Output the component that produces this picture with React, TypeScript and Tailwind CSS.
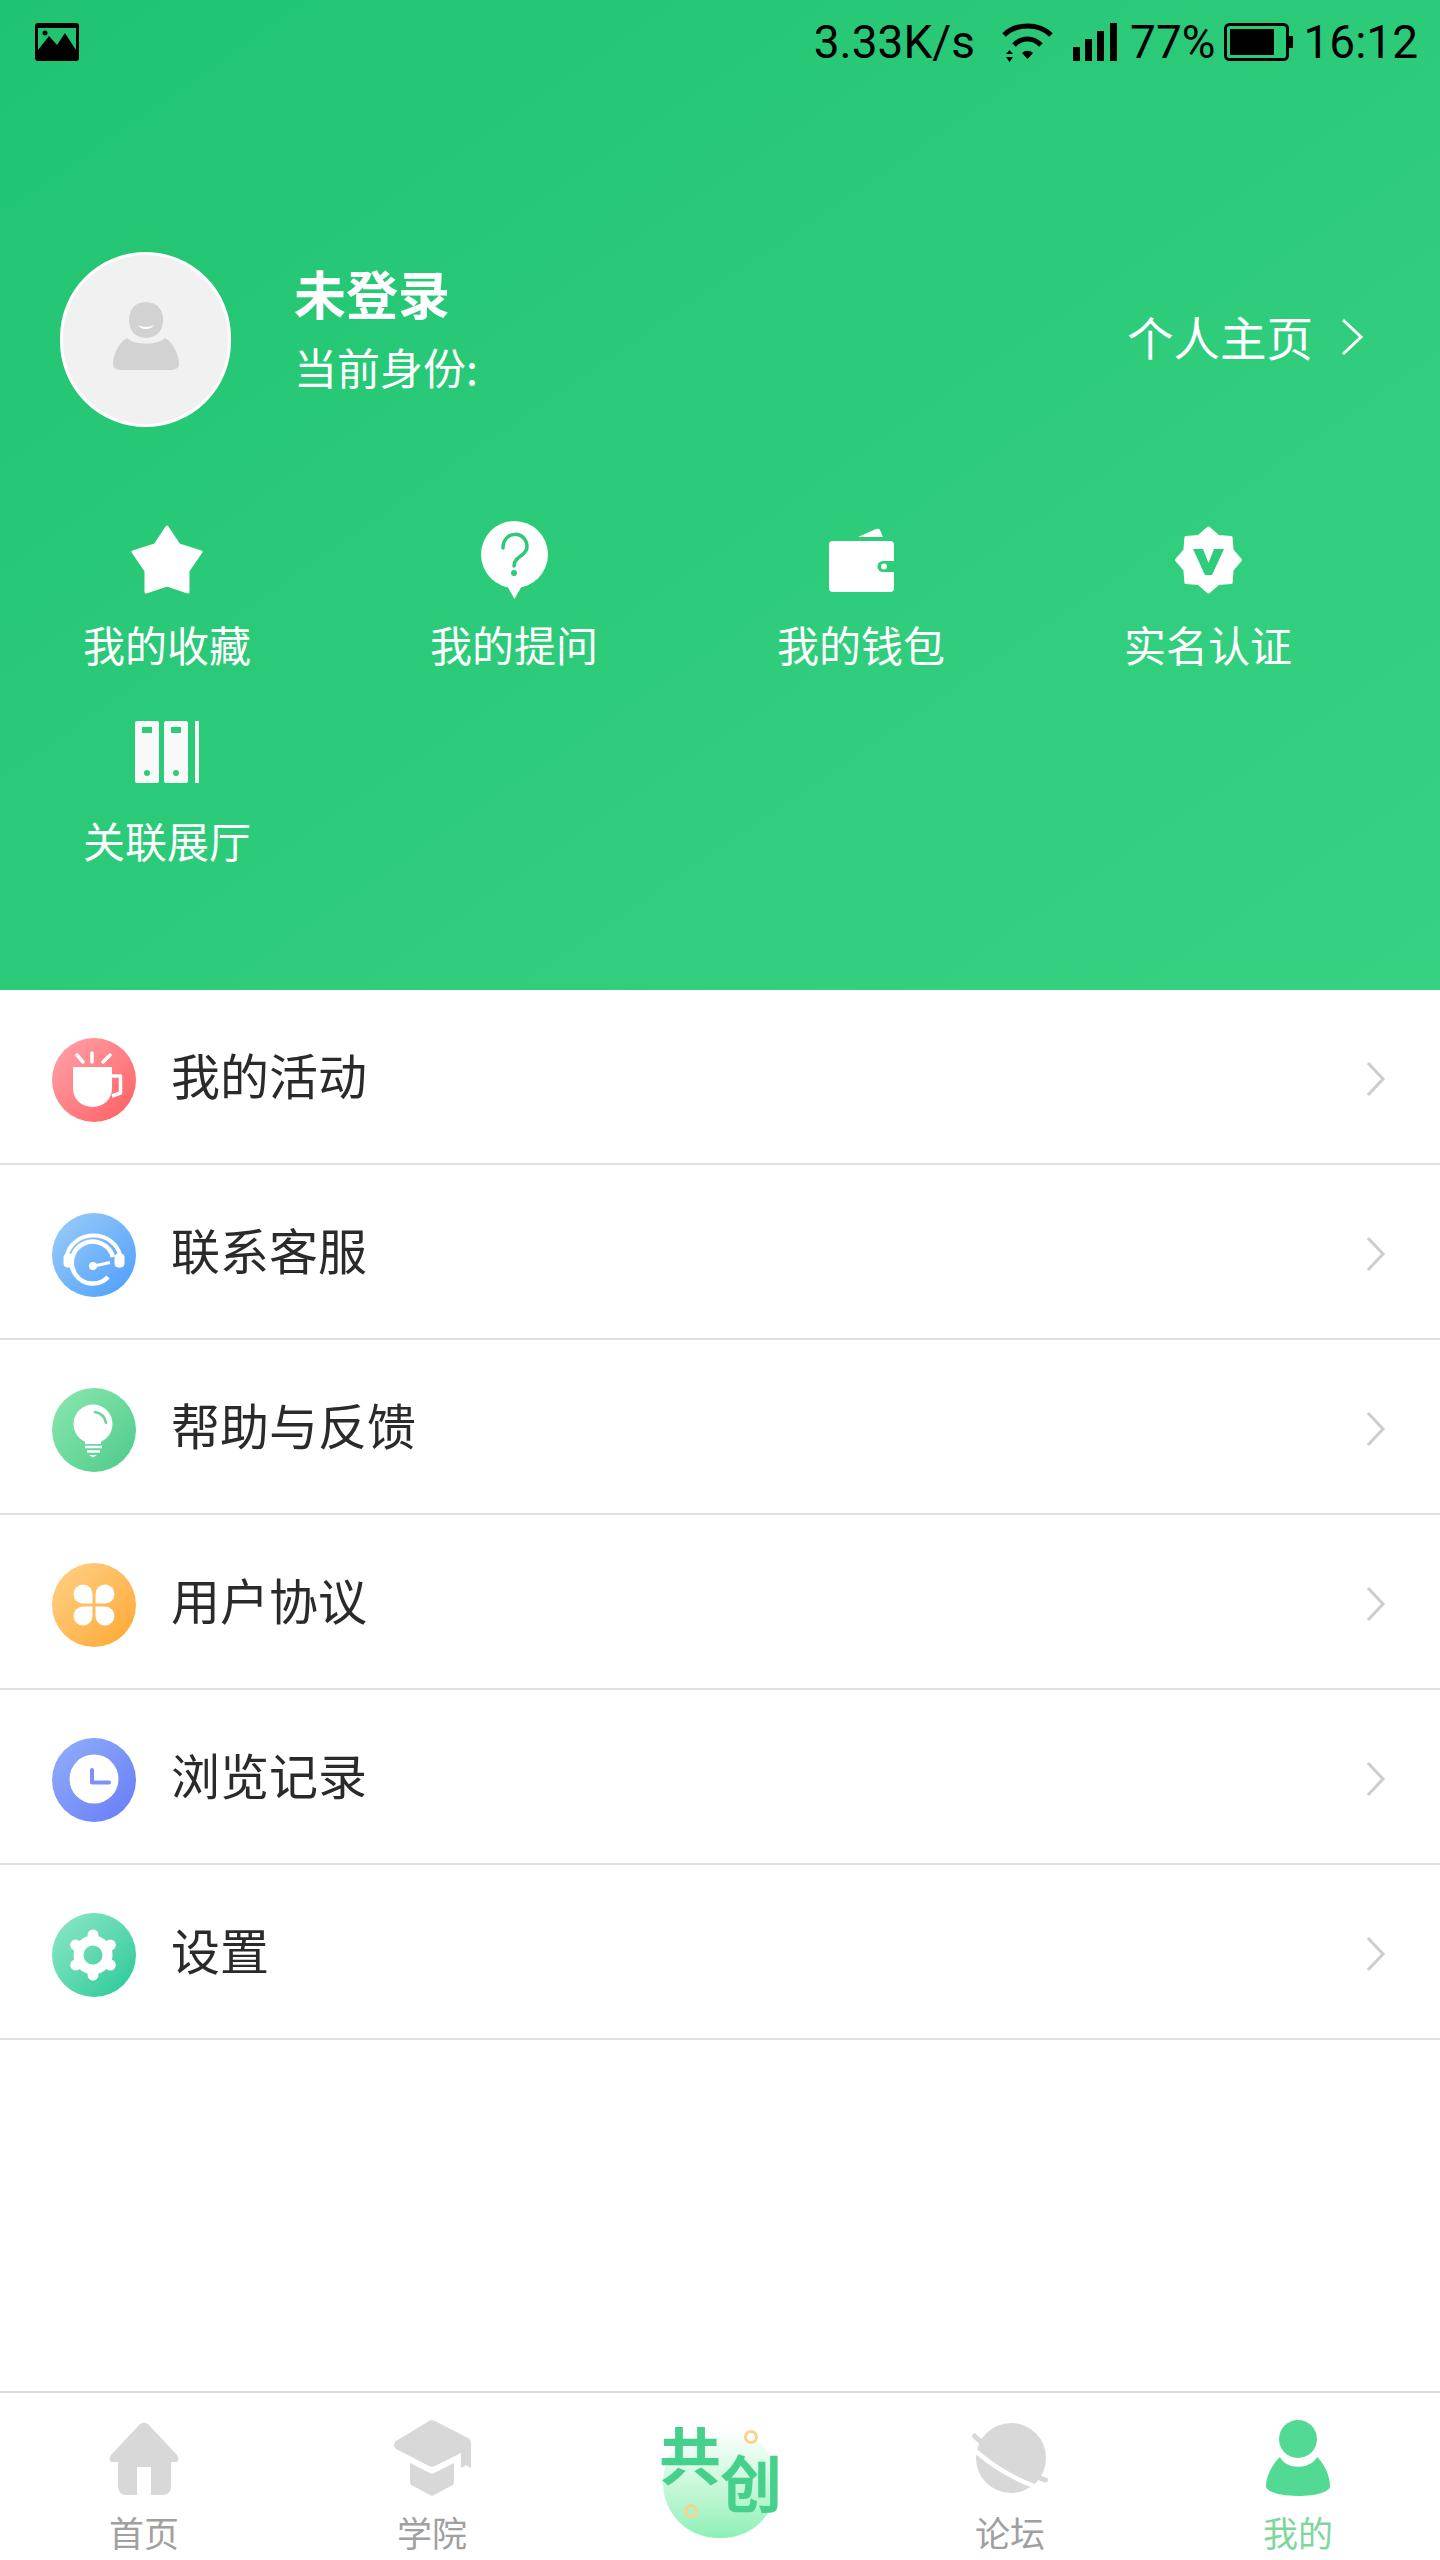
import type { ReactNode } from 'react';

const StarIcon = () => (
  <svg width="72" height="70" viewBox="0 0 72 70" fill="#fff">
    <path
      d="M36 2 L48 20 L70 27 L57 46 L57 67 L36 60 L15 67 L15 46 L2 27 L24 20 Z"
      stroke="#fff"
      strokeWidth="3"
      strokeLinejoin="round"
    />
  </svg>
);

const QuestionIcon = () => (
  <svg width="67" height="78" viewBox="0 0 67 78">
    <circle cx="33.5" cy="33.5" r="33.5" fill="#fff" />
    <path d="M25 63 L33.5 78 L42 63 Z" fill="#fff" />
    <path
      d="M22 27 C22 9 46 9 46 26 C46 35 33 35 33 45"
      fill="none"
      stroke="#2bca79"
      strokeWidth="3.5"
      strokeLinecap="round"
    />
    <circle cx="33" cy="52" r="3" fill="#2bca79" />
  </svg>
);

const WalletIcon = () => (
  <svg width="65" height="64" viewBox="0 0 65 64">
    <path d="M29 9 L47 1 Q50 0 51 2 L54 9 Z" fill="#fff" />
    <rect x="0" y="13" width="65" height="51" rx="4" fill="#fff" />
    <path d="M65 33 H54 A5.5 5.500 0 0 0 54 44 H65 Z" fill="#2fcc7c" />
    <circle cx="55" cy="38.500" r="3" fill="#fff" />
  </svg>
);

const BadgeIcon = () => (
  <svg width="69" height="68" viewBox="0 0 69 68">
    <path
      d="M34.500 2 L44.300 10.400 L57.100 11.400 L58.100 24.200 L66.500 34 L58.100 43.800 L57.100 56.600 L44.300 57.600 L34.500 66 L24.700 57.600 L11.900 56.600 L10.900 43.800 L2.500 34 L10.900 24.200 L11.900 11.400 L24.700 10.400 Z"
      fill="#fff"
      stroke="#fff"
      strokeWidth="3"
      strokeLinejoin="round"
    />
    <path d="M19 23 H29 L34.500 37 L40 23 H50 L38 49 H31 Z" fill="#2fcc7c" />
  </svg>
);

const BooksIcon = () => (
  <svg width="64" height="62" viewBox="0 0 64 62" className="mb-[8px]">
    <rect x="0" y="0" width="24" height="62" rx="2" fill="#f7faf8" />
    <rect x="29" y="0" width="24" height="62" rx="2" fill="#f7faf8" />
    <rect x="60" y="0" width="4" height="62" fill="#f7faf8" />
    <rect x="7" y="6" width="10" height="6" fill="#2dcb7a" />
    <rect x="36" y="6" width="10" height="6" fill="#2dcb7a" />
    <circle cx="12" cy="52" r="3" fill="#2dcb7a" />
    <circle cx="41" cy="52" r="3" fill="#2dcb7a" />
  </svg>
);

const CupIcon = () => (
  <svg width="84" height="84" viewBox="0 0 84 84" fill="#fff">
    <path d="M22 30 H59 V50 C59 61 51 68 40.500 68 C30 68 22 61 22 50 Z" stroke="#fff" strokeWidth="2" strokeLinejoin="round" />
    <path d="M60 38 H68.500 V55 L60 58" fill="none" stroke="#fff" strokeWidth="3.500" strokeLinejoin="round" />
    <path d="M40 15 V24 M25 17 L31 24 M58 17 L51 24" stroke="#fff" strokeWidth="3.500" strokeLinecap="round" />
  </svg>
);

const HeadsetIcon = () => (
  <svg width="84" height="84" viewBox="0 0 84 84" fill="none" stroke="#fff">
    <path d="M56 64 A21 21 0 1 1 61 44" strokeWidth="4.500" />
    <path d="M15 42 A27 24 0 0 1 68 42" strokeWidth="4" />
    <rect x="12" y="41" width="9" height="13" rx="3" fill="#fff" strokeWidth="1" />
    <rect x="63" y="41" width="9" height="13" rx="3" fill="#fff" strokeWidth="1" />
    <path d="M42 53 L58 49.500" strokeWidth="3" />
    <circle cx="41" cy="53" r="4" fill="#fff" strokeWidth="0" />
  </svg>
);

const BulbIcon = () => (
  <svg width="84" height="84" viewBox="0 0 84 84" fill="none">
    <circle cx="41" cy="36" r="19.500" fill="#fff" />
    <path d="M33 50 H49 V56 H33 Z" fill="#fff" />
    <path d="M33 59 H50 M35 63.500 H48" stroke="#fff" strokeWidth="2.500" />
    <path d="M37 67 H45 L41 69.500 Z" fill="#fff" />
    <path d="M43 24 C49 25 53 29 54 35" stroke="#6ad79d" strokeWidth="2.500" strokeLinecap="round" />
  </svg>
);

const CloverIcon = () => (
  <svg width="84" height="84" viewBox="0 0 84 84" fill="#fff">
    <path d="M40.500 40.500 V31 A9.500 9.500 0 0 0 31 21.500 A9.500 9.500 0 0 0 21.500 31 A9.500 9.500 0 0 0 31 40.500 Z" />
    <path d="M43.500 40.500 V31 A9.500 9.500 0 0 1 53 21.500 A9.500 9.500 0 0 1 62.500 31 A9.500 9.500 0 0 1 53 40.500 Z" />
    <path d="M40.500 43.500 V53 A9.500 9.500 0 0 1 31 62.500 A9.500 9.500 0 0 1 21.500 53 A9.500 9.500 0 0 1 31 43.500 Z" />
    <path d="M43.500 43.500 V53 A9.500 9.500 0 0 0 53 62.500 A9.500 9.500 0 0 0 62.500 53 A9.500 9.500 0 0 0 53 43.500 Z" />
  </svg>
);

const ClockIcon = () => (
  <svg width="84" height="84" viewBox="0 0 84 84" fill="none">
    <circle cx="42" cy="41" r="24.500" fill="#fff" />
    <path d="M40 32 V44.500 H57" stroke="#7c92f7" strokeWidth="4" strokeLinecap="round" strokeLinejoin="round" />
  </svg>
);

const GearIcon = () => (
  <svg width="84" height="84" viewBox="0 0 84 84" fill="none">
    <circle cx="41" cy="42" r="14.500" stroke="#fff" strokeWidth="10" />
    <g fill="#fff">
      <circle cx="41" cy="22" r="5.500" />
      <circle cx="41" cy="62" r="5.500" />
      <circle cx="23.700" cy="32" r="5.500" />
      <circle cx="58.300" cy="52" r="5.500" />
      <circle cx="23.700" cy="52" r="5.500" />
      <circle cx="58.300" cy="32" r="5.500" />
    </g>
  </svg>
);

const RowChevron = () => (
  <svg width="22" height="42" viewBox="0 0 22 42" fill="none">
    <path d="M3 5 L18 21 L3 37" stroke="#cdcdcd" strokeWidth="3" />
  </svg>
);

const quickLinks: { label: string; icon: ReactNode }[] = [
  { label: '我的收藏', icon: <StarIcon /> },
  { label: '我的提问', icon: <QuestionIcon /> },
  { label: '我的钱包', icon: <WalletIcon /> },
  { label: '实名认证', icon: <BadgeIcon /> },
  { label: '关联展厅', icon: <BooksIcon /> },
];

const menuRows: { label: string; bg: string; icon: ReactNode }[] = [
  { label: '我的活动', bg: 'from-[#ffa3ab] to-[#ff5b60]', icon: <CupIcon /> },
  { label: '联系客服', bg: 'from-[#9dcdf8] to-[#4a9dfa]', icon: <HeadsetIcon /> },
  { label: '帮助与反馈', bg: 'from-[#8ae8b0] to-[#4bca8a]', icon: <BulbIcon /> },
  { label: '用户协议', bg: 'from-[#ffd184] to-[#ffa729]', icon: <CloverIcon /> },
  { label: '浏览记录', bg: 'from-[#93aefb] to-[#667cf5]', icon: <ClockIcon /> },
  { label: '设置', bg: 'from-[#8ce8ca] to-[#0cc898]', icon: <GearIcon /> },
];

const StatusBar = () => (
  <div className="h-[84px] flex items-center justify-between pl-[35px] pr-[22px] text-black font-['Roboto',sans-serif] text-[46px] leading-none">
    <svg width="44" height="38" viewBox="0 0 44 38">
      <rect x="0" y="0" width="44" height="38" rx="3" fill="#000" />
      <rect x="3" y="5" width="38" height="22" fill="#22c472" />
      <path d="M3 27 L14 13 L22 22 L30 10 L41 27 Z" fill="#000" />
      <circle cx="10" cy="10" r="2.500" fill="#000" />
    </svg>
    <div className="flex items-center">
      <span className="mr-[27px]">3.33K/s</span>
      <svg width="51" height="44" viewBox="0 0 51 44" fill="none" className="mr-[20px]">
        <path d="M2 15 C14 3 37 3 49 15" stroke="#000" strokeWidth="5" />
        <path d="M12 25 C20 17 31 17 39 25" stroke="#000" strokeWidth="5" />
        <path d="M20 33 C23 30 28 30 31 33 L25.500 39 Z" fill="#000" />
        <path d="M4 34 H11 L7.500 30 Z M4 37 H11 L7.500 42 Z" fill="#000" />
      </svg>
      <svg width="44" height="38" viewBox="0 0 44 38" fill="#000" className="mr-[13px]">
        <rect x="0" y="24" width="7" height="14" />
        <rect x="12" y="16" width="7" height="22" />
        <rect x="24" y="8" width="7" height="30" />
        <rect x="37" y="0" width="7" height="38" />
      </svg>
      <span className="mr-[9px]">77%</span>
      <svg width="69" height="38" viewBox="0 0 69 38" fill="none" className="mr-[10px]">
        <rect x="1.500" y="1.500" width="62" height="35" rx="4" stroke="#000" strokeWidth="3" />
        <rect x="6" y="6" width="44" height="26" fill="#000" />
        <rect x="65" y="13" width="4" height="12" fill="#000" />
      </svg>
      <span>16:12</span>
    </div>
  </div>
);

const Profile = () => (
  <div className="mt-[168px] flex items-center pl-[60px] pr-[76px]">
    <div className="w-[171px] h-[175px] rounded-full bg-[#f1f1f1] border-[3px] border-white flex items-center justify-center">
      <svg width="70" height="68" viewBox="0 0 70 72" fill="#d2d2d2" className="mb-[8px]">
        <path d="M35 0 C47 0 54 9 53 21 C52 32 45 38 35 38 C25 38 18 32 17 21 C16 9 23 0 35 0 Z" />
        <path d="M15 38 C22 46 48 46 55 38 C64 43 70 56 70 66 C70 70 66 72 62 72 H8 C4 72 0 70 0 66 C0 56 6 43 15 38 Z" />
        <path d="M26 24 C30 30 40 30 44 24 C40 27 30 27 26 24 Z" fill="#fff" />
      </svg>
    </div>
    <div className="ml-[63px] mb-[24px] text-white">
      <div className="text-[52px] leading-[64px] font-bold">未登录</div>
      <div className="text-[43px] leading-[56px] mt-[13px]">当前身份:</div>
    </div>
    <div className="ml-auto mb-[6px] flex items-center text-white">
      <span className="text-[46.500px] leading-none">个人主页</span>
      <svg width="24" height="40" viewBox="0 0 24 40" fill="none" className="ml-[27px]">
        <path d="M3 3 L21 20 L3 37" stroke="#fff" strokeWidth="3" />
      </svg>
    </div>
  </div>
);

const QuickLinks = () => (
  <div className="mt-[93px] pl-[84px] grid grid-cols-[repeat(4,166px)] gap-x-[181px] gap-y-[41px]">
    {quickLinks.map((item) => (
      <div key={item.label} className="flex flex-col items-center h-[155px]">
        <div className="h-[80px] flex items-center justify-center">{item.icon}</div>
        <div className="mt-[16px] text-white text-[42px] leading-[56px] whitespace-nowrap">{item.label}</div>
      </div>
    ))}
  </div>
);

const Menu = () => (
  <div>
    {menuRows.map((row) => (
      <div key={row.label} className="h-[175px] border-b-2 border-[#e0e0e0] flex items-center pl-[52px] pr-[53px]">
        <div className={`w-[84px] h-[84px] mt-[6px] rounded-full bg-linear-to-br ${row.bg}`}>{row.icon}</div>
        <div className="ml-[35px] mb-[6px] text-[49px] leading-none text-[#2a2a2a]">{row.label}</div>
        <div className="ml-auto mt-[4px] flex">
          <RowChevron />
        </div>
      </div>
    ))}
  </div>
);

const HomeIcon = () => (
  <svg width="70" height="73" viewBox="0 0 70 73" fill="#d8d8d8">
    <path d="M31 2 Q35 -1 39 2 L68 33 Q72 40 65 40 H62 V64 Q62 73 53 73 H42 V45 H28 V73 H18 Q9 73 9 64 V40 H5 Q-2 40 2 33 Z" />
  </svg>
);

const CapIcon = () => (
  <svg width="78" height="76" viewBox="0 0 78 76" fill="#d8d8d8">
    <path d="M36 1 Q39 -0.500 42 1 L75 18 Q78 20 78 24 V48 L73 45 L68 48 V33 L42 46 Q39 47.500 36 46 L3 29 Q-1 25 3 21 Z" />
    <path d="M17 43 L39 54 L61 43 V62 Q61 65 58 66 L39 76 L20 66 Q17 65 17 62 Z" />
  </svg>
);

const PlanetIcon = () => (
  <svg width="76" height="72" viewBox="0 0 76 72" fill="none">
    <circle cx="39" cy="36" r="35" fill="#d8d8d8" />
    <path d="M2.500 14 C20 32 45 50 73.500 58" stroke="#d8d8d8" strokeWidth="5" strokeLinecap="round" />
    <path d="M-2 24 C15 40 38 55 62 64" stroke="#fff" strokeWidth="4.500" />
  </svg>
);

const PersonIcon = () => (
  <svg width="64" height="76" viewBox="0 0 64 76" fill="#52d993">
    <circle cx="32" cy="19" r="19" />
    <path d="M14 37 C20 50 44 50 51 37 C58 43 64 56 64 66 C64 72 50 76 32 76 C14 76 0 72 0 66 C0 56 7 43 14 37 Z" />
  </svg>
);

const Logo = () => (
  <div className="relative w-[120px] h-[120px] font-bold text-[#45d08c] leading-none">
    <div className="absolute left-[3px] top-[8px] w-[114px] h-[110px] rounded-full bg-linear-to-b from-[#ffffff] to-[#8df0b6]" />
    <div className="absolute left-[-1px] top-[2px] text-[62px]">共</div>
    <div className="absolute left-[60px] top-[30px] text-[62px]">创</div>
    <div className="absolute left-[84px] top-[10px] w-[14px] h-[14px] rounded-full border-[3px] border-[#fbd28c]" />
    <div className="absolute left-[24px] top-[84px] w-[14px] h-[14px] rounded-full border-[3px] border-[#fbd28c]" />
  </div>
);

const TabItem = ({ icon, label, active }: { icon: ReactNode; label: string; active?: boolean }) => (
  <div className="flex flex-col items-center">
    <div className="h-[76px] flex items-center">{icon}</div>
    <div className={`mt-[11px] text-[35px] leading-[50px] ${active ? 'text-[#7fd69d]' : 'text-[#a0a0a0]'}`}>{label}</div>
  </div>
);

const TabBar = () => (
  <div className="h-[169px] border-t-2 border-[#dcdcdc] pt-[27px] grid grid-cols-5 items-start">
    <div className="flex justify-center">
      <TabItem icon={<HomeIcon />} label="首页" />
    </div>
    <div className="flex justify-center">
      <TabItem icon={<CapIcon />} label="学院" />
    </div>
    <div className="flex justify-center">
      <Logo />
    </div>
    <div className="flex justify-center pl-[4px]">
      <TabItem icon={<PlanetIcon />} label="论坛" />
    </div>
    <div className="flex justify-center pl-[4px]">
      <TabItem icon={<PersonIcon />} label="我的" active />
    </div>
  </div>
);

const App = () => (
  <div className="w-[1440px] h-[2560px] flex flex-col bg-white font-['Noto_Sans_CJK_SC','Noto_Sans',sans-serif]">
    <div className="h-[990px] bg-linear-to-br from-[#20c470] to-[#36d283]">
      <StatusBar />
      <Profile />
      <QuickLinks />
    </div>
    <Menu />
    <div className="flex-1" />
    <TabBar />
  </div>
);

export default App;
